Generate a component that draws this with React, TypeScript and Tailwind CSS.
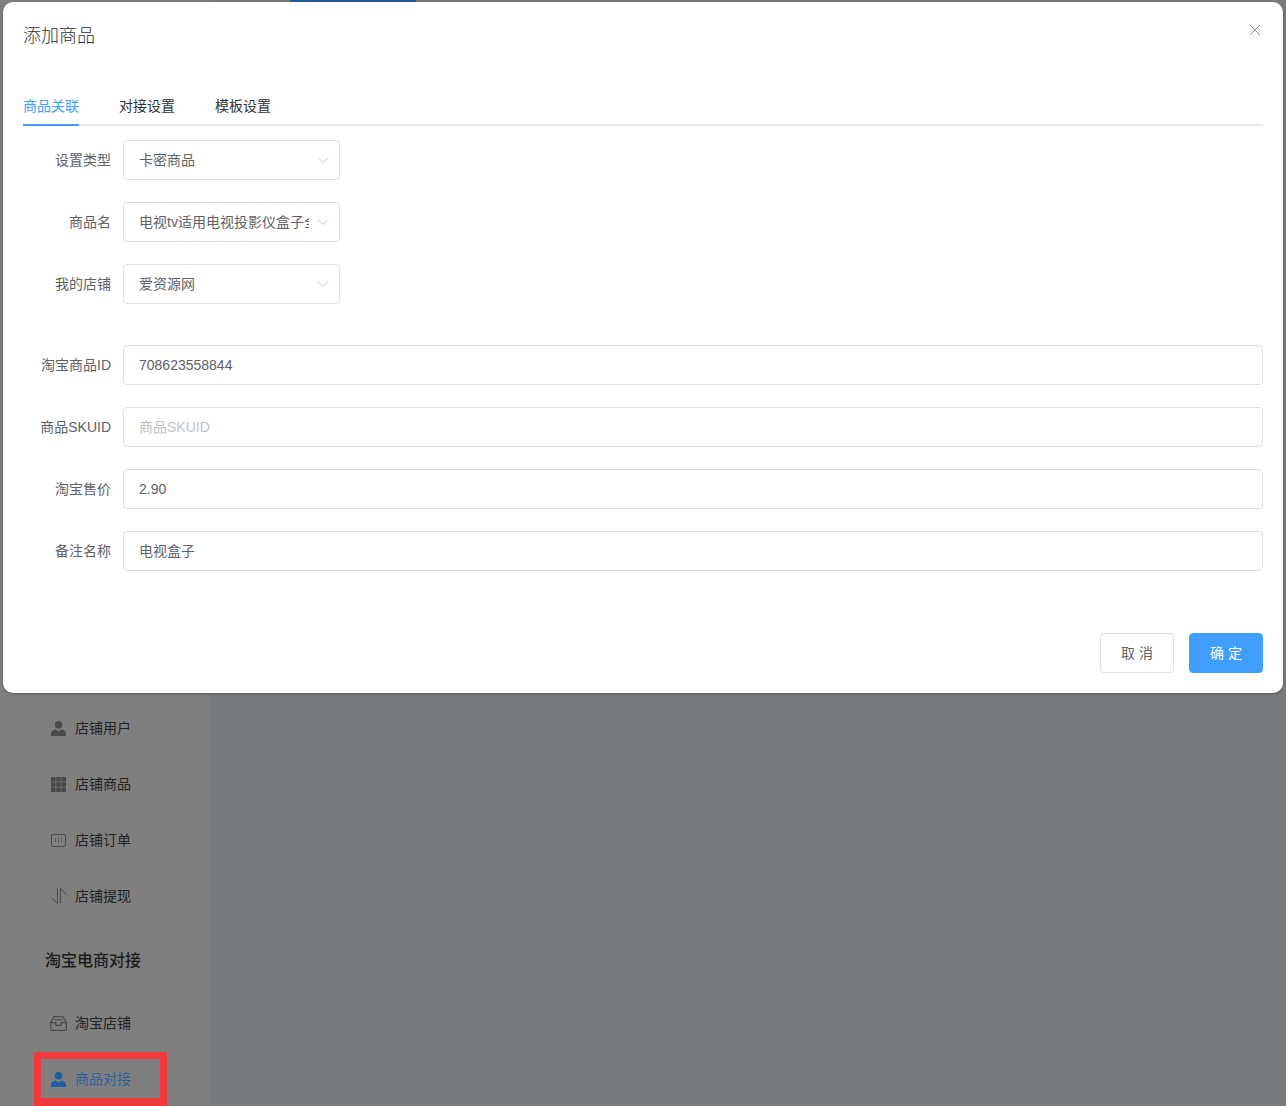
import React from "react";

const font = { fontFamily: '"Liberation Sans","Noto Sans CJK SC",sans-serif' };

function Chevron() {
  return (
    <svg width="12" height="12" viewBox="0 0 12 12" fill="none" className="absolute right-[10px] top-[13px]">
      <path d="M1 3.5 6 8.5 11 3.5" stroke="#c0c4cc" strokeWidth="1" />
    </svg>
  );
}

function Label({ children }: { children: React.ReactNode }) {
  return <div className="w-[100px] shrink-0 pr-3 text-right text-sm text-[#606266] whitespace-nowrap">{children}</div>;
}

function SelectRow({ label, value }: { label: string; value: string }) {
  return (
    <div className="flex items-center h-10 mb-[22px]">
      <Label>{label}</Label>
      <div className="relative h-10 w-[217px] rounded border border-[#dcdfe6] bg-white pl-[15px] pr-[30px] leading-[38px] text-sm text-[#606266] overflow-hidden whitespace-nowrap">
        <div className="overflow-hidden">{value}</div>
        <Chevron />
      </div>
    </div>
  );
}

function InputRow({ label, value, placeholder }: { label: string; value?: string; placeholder?: string }) {
  return (
    <div className="flex items-center h-10 mb-[22px]">
      <Label>{label}</Label>
      <div className={`h-10 flex-1 rounded border border-[#dcdfe6] bg-white px-[15px] leading-[38px] text-sm ${value ? "text-[#606266]" : "text-[#c0c4cc]"}`}>
        {value || placeholder}
      </div>
    </div>
  );
}

function SideItem({ icon, label, active }: { icon: React.ReactNode; label: string; active?: boolean }) {
  return (
    <div className={`flex items-center h-14 pl-[51px] gap-[9px] text-sm ${active ? "text-[#2f5f9e]" : "text-[#222222]"}`}>
      <span className={`w-[15px] h-[15px] shrink-0 flex items-center justify-center ${active ? "text-[#1f5ca8]" : "text-[#4a4a4a]"}`}>{icon}</span>
      <span>{label}</span>
    </div>
  );
}

const UserIcon = (
  <svg width="15" height="15" viewBox="0 0 15 15" fill="currentColor" className="shrink-0">
    <ellipse cx="7.5" cy="3.8" rx="3.7" ry="3.8" />
    <path d="M0 15v-2.8C0 10 2.2 8.8 4.6 8.4L7.5 10.6 10.4 8.4C12.8 8.8 15 10 15 12.2V15Z" />
  </svg>
);
const GridIcon = (
  <svg width="15" height="15" viewBox="0 0 15 15" fill="currentColor" className="shrink-0">
    {[0, 5.2, 10.4].flatMap((y) =>
      [0, 5.2, 10.4].map((x) => <rect key={`${x}-${y}`} x={x} y={y} width="4.6" height="4.6" />)
    )}
  </svg>
);
const OrderIcon = (
  <svg width="15" height="13" viewBox="0 0 15 13" fill="none" stroke="currentColor" className="shrink-0">
    <rect x="0.5" y="0.5" width="14" height="12" rx="1.5" />
    <path d="M4.5 4v5M7.5 3.5v6M10.5 4v5" strokeDasharray="1.5 1" />
  </svg>
);
const TransferIcon = (
  <svg width="16" height="16" viewBox="0 0 16 16" fill="none" stroke="currentColor" className="shrink-0">
    <path d="M6.5 0.5v15L0.5 9.5M9.5 15.5V0.5L15.5 7" />
  </svg>
);
const InboxIcon = (
  <svg width="17" height="15" viewBox="0 0 17 15" fill="none" stroke="currentColor" strokeWidth="1.2" className="shrink-0">
    <path d="M4 .7h9l3.3 6v6.6a1 1 0 0 1-1 1H1.7a1 1 0 0 1-1-1V6.700Z" />
    <path d="M.7 6.700h5.300v2.600h5V6.700h5.300M4.500 3.600h8" />
  </svg>
);

export default function App() {
  return (
    <div className="relative h-[1106px] w-[1286px] overflow-hidden bg-[#787b7f]" style={font}>
      <div className="flex h-full">
        <aside className="w-[211px] h-full bg-[#7f7f7f] pt-[700px]">
          <SideItem icon={UserIcon} label="店铺用户" />
          <SideItem icon={GridIcon} label="店铺商品" />
          <SideItem icon={OrderIcon} label="店铺订单" />
          <SideItem icon={TransferIcon} label="店铺提现" />
          <div className="h-[71px] pl-[45px] pt-[25px] text-base leading-6 font-medium text-[#1c1c1c]">淘宝电商对接</div>
          <SideItem icon={InboxIcon} label="淘宝店铺" />
          <SideItem icon={UserIcon} label="商品对接" active />
        </aside>
        <main className="flex-1" />
      </div>

      <div className="absolute left-[290px] top-0 h-[2px] w-[126px] bg-[#245a9c]" />

      <div className="absolute left-[3px] top-[2px] h-[691px] w-[1280px] rounded-[10px] bg-white px-5 shadow-[0_1px_3px_rgba(0,0,0,0.3)]">
        <div className="pt-[22px] text-lg leading-6 font-light text-[#303133]">添加商品</div>
        <svg width="12" height="12" viewBox="0 0 12 12" className="absolute right-[22px] top-[22px]" fill="none" stroke="#909399">
          <path d="M1 1l10 10M11 1 1 11" />
        </svg>

        <div className="mt-[38px] flex h-10 gap-10 border-b-2 border-[#e4e7ed] text-sm leading-10">
          <div className="relative text-[#409eff]">
            商品关联
            <div className="absolute left-0 right-0 bottom-[-2px] h-[2px] bg-[#409eff]" />
          </div>
          <div className="text-[#303133]">对接设置</div>
          <div className="text-[#303133]">模板设置</div>
        </div>

        <div className="mt-[14px]">
          <SelectRow label="设置类型" value="卡密商品" />
          <SelectRow label="商品名" value="电视tv适用电视投影仪盒子全网通用" />
          <SelectRow label="我的店铺" value="爱资源网" />
          <div className="h-[19px]" />
          <InputRow label="淘宝商品ID" value="708623558844" />
          <InputRow label="商品SKUID" placeholder="商品SKUID" />
          <InputRow label="淘宝售价" value="2.90" />
          <InputRow label="备注名称" value="电视盒子" />
        </div>

        <div className="mt-[62px] flex justify-end gap-[15px]">
          <button className="h-10 w-[74px] rounded border border-[#dcdfe6] bg-white text-sm text-[#606266]">取 消</button>
          <button className="h-10 w-[74px] rounded border border-[#409eff] bg-[#409eff] text-sm text-white">确 定</button>
        </div>
      </div>

      <div className="absolute left-[34px] top-[1052px] h-[54px] w-[133px] border-[7px] border-b-[8px] border-[#f33a3a]" />
    </div>
  );
}
